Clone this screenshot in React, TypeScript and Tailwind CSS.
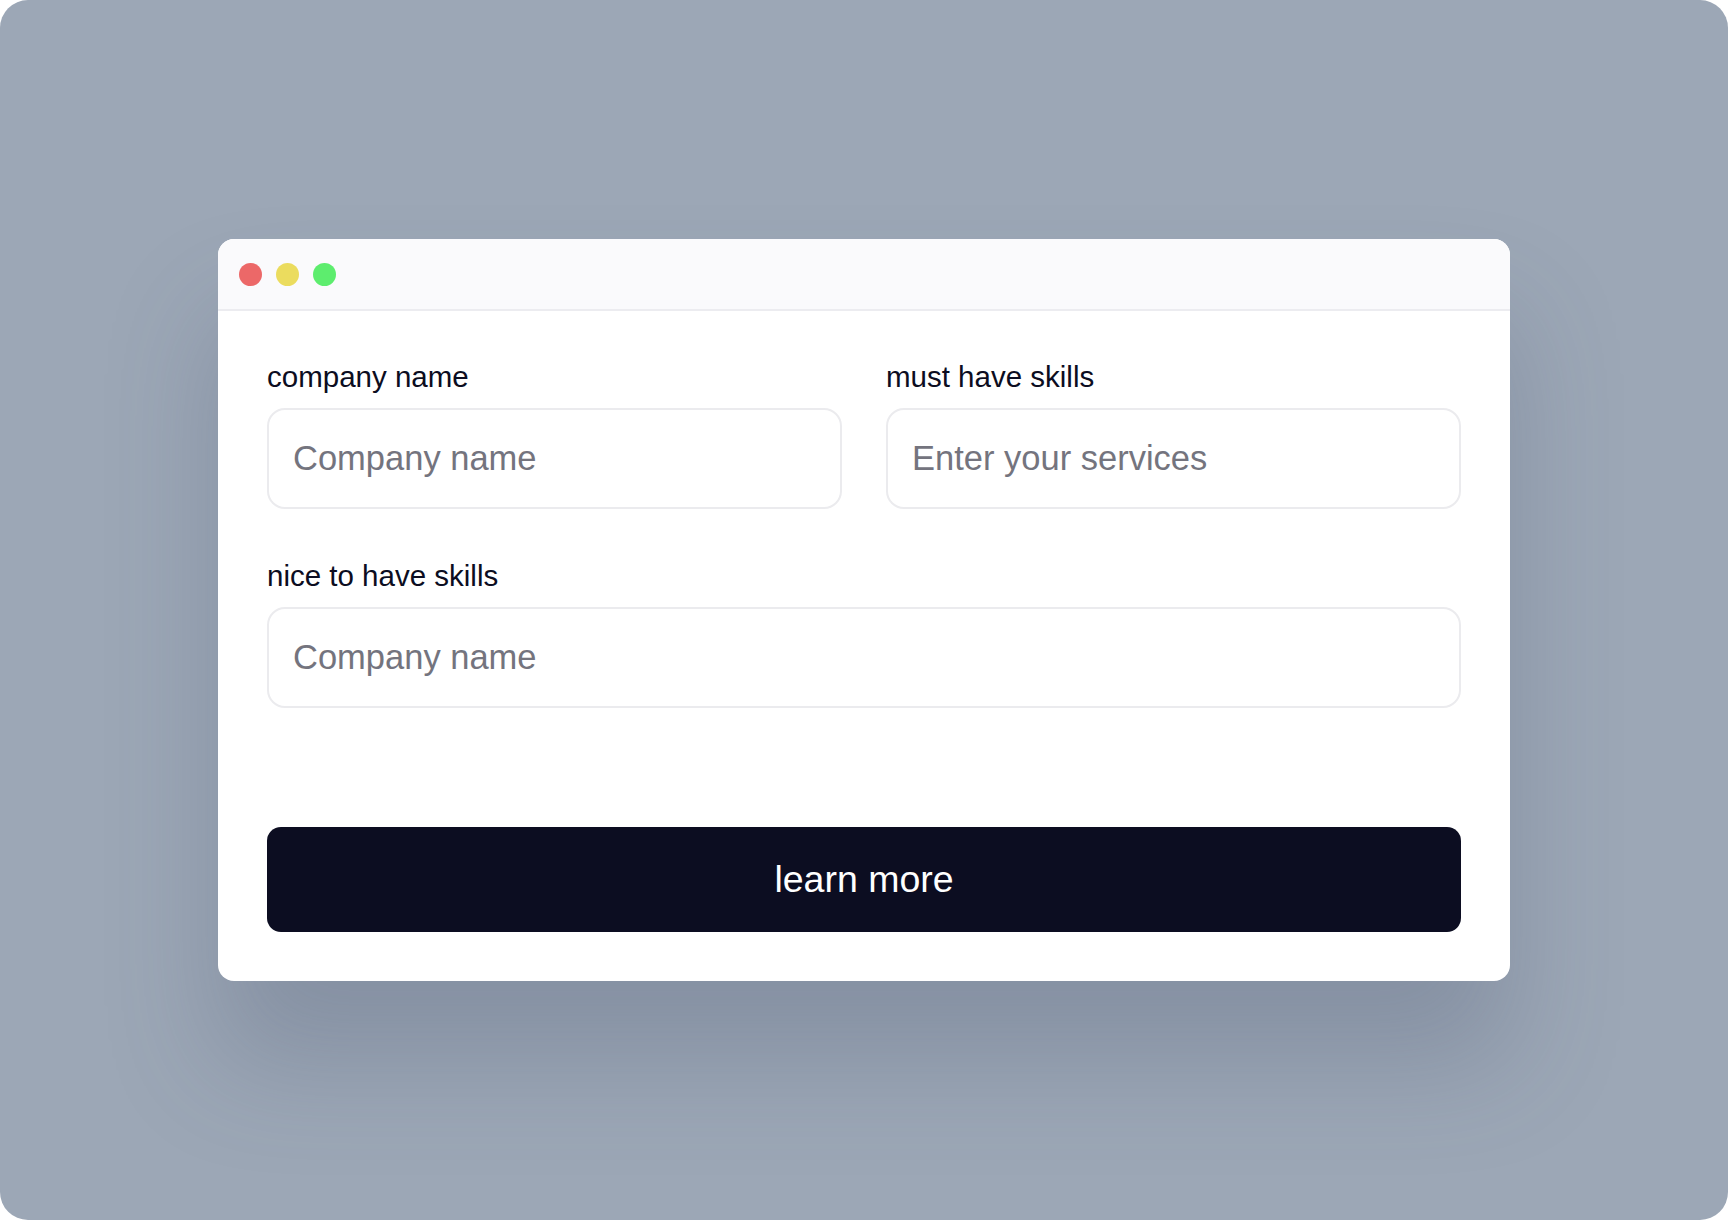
export default function App() {
  const font = { fontFamily: '"Liberation Sans", Arial, sans-serif' }

  return (
    <div className="h-screen w-full bg-white" style={font}>
      <div className="h-full w-full rounded-[28px] bg-[#9ca7b6] flex items-center justify-center">
        {/* Window */}
        <div className="w-[1292px] rounded-[16px] bg-white overflow-hidden shadow-[0_80px_110px_rgba(70,80,110,0.26)]">
          {/* Title bar */}
          <div className="h-[72px] bg-[#fafafc] border-b-2 border-[#ececf0] flex items-center gap-[14px] pl-[21px]">
            <span className="w-[23px] h-[23px] rounded-full bg-[#ec6868]" />
            <span className="w-[23px] h-[23px] rounded-full bg-[#ebdc5e]" />
            <span className="w-[23px] h-[23px] rounded-full bg-[#5ded6e]" />
          </div>

          {/* Form */}
          <div className="px-[49px] pt-[48px] pb-[49px]">
            <div className="grid grid-cols-2 gap-x-[44px] gap-y-[49px]">
              <div>
                <label className="block text-[29.5px] leading-[35px] text-[#0c0d21] mb-[14px]">company name</label>
                <input
                  placeholder="Company name"
                  className="w-full h-[101px] rounded-[18px] border-2 border-[#ebebee] px-[24px] text-[34.5px] text-[#0c0d21] placeholder:text-[#74747e] outline-none"
                />
              </div>
              <div>
                <label className="block text-[29.5px] leading-[35px] text-[#0c0d21] mb-[14px]">must have skills</label>
                <input
                  placeholder="Enter your services"
                  className="w-full h-[101px] rounded-[18px] border-2 border-[#ebebee] px-[24px] text-[34.5px] text-[#0c0d21] placeholder:text-[#74747e] outline-none"
                />
              </div>
              <div className="col-span-2">
                <label className="block text-[29.5px] leading-[35px] text-[#0c0d21] mb-[14px]">nice to have skills</label>
                <input
                  placeholder="Company name"
                  className="w-full h-[101px] rounded-[18px] border-2 border-[#ebebee] px-[24px] text-[34.5px] text-[#0c0d21] placeholder:text-[#74747e] outline-none"
                />
              </div>
            </div>

            <button className="mt-[119px] w-full h-[105px] rounded-[14px] bg-[#0c0d21] text-white text-[37.5px]">
              learn more
            </button>
          </div>
        </div>
      </div>
    </div>
  )
}
